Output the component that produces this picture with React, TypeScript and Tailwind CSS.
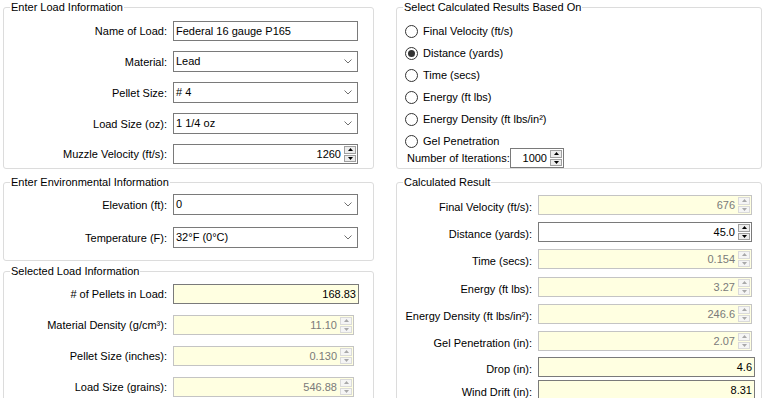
import React from "react";

const Chevron = () => (
  <svg width="8" height="5" viewBox="0 0 8 5" className="mr-[5px] shrink-0">
    <polyline points="0.5,0.5 4,4 7.5,0.5" fill="none" stroke="#707070" strokeWidth="1" />
  </svg>
);

const Tri = ({ up, color }: { up: boolean; color: string }) => (
  <svg width="5" height="3" viewBox="0 0 5 3">
    {up ? <polygon points="2.5,0 5,3 0,3" fill={color} /> : <polygon points="0,0 5,0 2.5,3" fill={color} />}
  </svg>
);

function Group({ title, className, children }: { title: string; className: string; children: React.ReactNode }) {
  return (
    <fieldset className={"border border-[#dcdcdc] rounded-[3px] min-w-0 shrink-0 " + className}>
      <legend className="ml-[6px] px-[1px] leading-[14px]">{title}</legend>
      {children}
    </fieldset>
  );
}

function TextBox({ value, w, yellow, right }: { value: string; w: string; yellow?: boolean; right?: boolean }) {
  return (
    <div
      className={
        "h-[20px] border border-[#7a7a7a] leading-[18px] " +
        w +
        (yellow ? " bg-[#ffffe1]" : " bg-white") +
        (right ? " text-right pr-[2px]" : " pl-[2px]")
      }
    >
      {value}
    </div>
  );
}

function Combo({ value }: { value: string }) {
  return (
    <div className="h-[21px] w-[185px] border border-[#7a7a7a] bg-white flex items-center pl-[2px]">
      <span className="flex-1">{value}</span>
      <Chevron />
    </div>
  );
}

function Spin({ value, w, disabled }: { value: string; w: string; disabled?: boolean }) {
  return (
    <div
      className={
        "h-[20px] flex " +
        w +
        (disabled ? " border border-[#c4c4c4] bg-[#ffffe1] text-[#7a7a7a]" : " border border-[#7a7a7a] bg-white text-black")
      }
    >
      <div className="flex-1 text-right pr-[3px] leading-[18px]">{value}</div>
      <div className="flex flex-col w-[12px] mr-[1px] my-[1px] gap-[1px]">
        {[true, false].map((up) => (
          <div
            key={String(up)}
            className={
              "h-[8px] flex items-center justify-center " +
              (disabled ? "border border-[#dadada] bg-[#f5f5f5]" : "border border-[#a0a0a0] bg-[#ececec]")
            }
          >
            <Tri up={up} color={disabled ? "#a8a8a8" : "#000000"} />
          </div>
        ))}
      </div>
    </div>
  );
}

function LRow({ label, children }: { label: string; children: React.ReactNode }) {
  return (
    <div className="flex items-center">
      <span className="w-[163px] text-right whitespace-nowrap leading-[14px]">{label}</span>
      <div className="ml-[6px]">{children}</div>
    </div>
  );
}

function RRow({ label, className, children }: { label: string; className: string; children: React.ReactNode }) {
  return (
    <div className={"flex items-center h-[20px] " + className}>
      <span className="w-[135px] text-right whitespace-nowrap leading-[14px] pt-[4px]">{label}</span>
      <div className="ml-[6px]">{children}</div>
    </div>
  );
}

function Radio({ label, checked }: { label: string; checked?: boolean }) {
  return (
    <div className="flex items-center h-[16px]">
      <span className="w-[13px] h-[13px] rounded-full border border-[#333333] bg-white flex items-center justify-center">
        {checked && <span className="w-[7px] h-[7px] rounded-full bg-[#333333]" />}
      </span>
      <span className="ml-[5px]">{label}</span>
    </div>
  );
}

export default function App() {
  return (
    <div className="w-[775px] h-[398px] overflow-hidden bg-white flex pl-[3px] gap-[22px] font-['Liberation_Sans',Arial,sans-serif] text-[11px] text-black">
      <div className="w-[371px] flex flex-col shrink-0">
        <Group title="Enter Load Information" className="h-[169px]">
          <div className="flex flex-col gap-[10px] pt-[7px]">
            <LRow label="Name of Load:">
              <TextBox value="Federal 16 gauge P165" w="w-[185px]" />
            </LRow>
            <LRow label="Material:">
              <Combo value="Lead" />
            </LRow>
            <LRow label="Pellet Size:">
              <Combo value="# 4" />
            </LRow>
            <LRow label="Load Size (oz):">
              <Combo value="1 1/4 oz" />
            </LRow>
            <LRow label="Muzzle Velocity (ft/s):">
              <Spin value="1260" w="w-[185px]" />
            </LRow>
          </div>
        </Group>
        <Group title="Enter Environmental Information" className="h-[86px] mt-[6px]">
          <div className="flex flex-col gap-[12px] pt-[5px]">
            <LRow label="Elevation (ft):">
              <Combo value="0" />
            </LRow>
            <LRow label="Temperature (F):">
              <Combo value="32°F (0°C)" />
            </LRow>
          </div>
        </Group>
        <Group title="Selected Load Information" className="h-[160px] mt-[3px]">
          <div className="flex flex-col gap-[11px] pt-[6px]">
            <LRow label="# of Pellets in Load:">
              <TextBox value="168.83" w="w-[186px]" yellow right />
            </LRow>
            <LRow label="Material Density (g/cm³):">
              <Spin value="11.10" w="w-[181px]" disabled />
            </LRow>
            <LRow label="Pellet Size (inches):">
              <Spin value="0.130" w="w-[181px]" disabled />
            </LRow>
            <LRow label="Load Size (grains):">
              <Spin value="546.88" w="w-[181px]" disabled />
            </LRow>
          </div>
        </Group>
      </div>
      <div className="w-[366px] flex flex-col shrink-0">
        <Group title="Select Calculated Results Based On" className="h-[169px]">
          <div className="flex flex-col gap-[6px] pt-[9px] pl-[8px]">
            <Radio label="Final Velocity (ft/s)" />
            <Radio label="Distance (yards)" checked />
            <Radio label="Time (secs)" />
            <Radio label="Energy (ft lbs)" />
            <Radio label="Energy Density (ft lbs/in²)" />
            <Radio label="Gel Penetration" />
          </div>
          <div className="flex items-center h-[20px] mt-[-1px] pl-[10px]">
            <span className="w-[103px] whitespace-nowrap">Number of Iterations:</span>
            <Spin value="1000" w="w-[54px]" />
          </div>
        </Group>
        <Group title="Calculated Result" className="h-[240px] mt-[6px]">
          <div className="flex flex-col pt-[6px]">
            <RRow label="Final Velocity (ft/s):" className="">
              <Spin value="676" w="w-[214px]" disabled />
            </RRow>
            <RRow label="Distance (yards):" className="mt-[7px]">
              <Spin value="45.0" w="w-[214px]" />
            </RRow>
            <RRow label="Time (secs):" className="mt-[7px]">
              <Spin value="0.154" w="w-[214px]" disabled />
            </RRow>
            <RRow label="Energy (ft lbs):" className="mt-[8px]">
              <Spin value="3.27" w="w-[214px]" disabled />
            </RRow>
            <RRow label="Energy Density (ft lbs/in²):" className="mt-[7px]">
              <Spin value="246.6" w="w-[214px]" disabled />
            </RRow>
            <RRow label="Gel Penetration (in):" className="mt-[7px]">
              <Spin value="2.07" w="w-[214px]" disabled />
            </RRow>
            <RRow label="Drop (in):" className="mt-[6px]">
              <TextBox value="4.6" w="w-[217px]" yellow right />
            </RRow>
            <RRow label="Wind Drift (in):" className="mt-[3px]">
              <TextBox value="8.31" w="w-[217px]" yellow right />
            </RRow>
          </div>
        </Group>
      </div>
    </div>
  );
}
